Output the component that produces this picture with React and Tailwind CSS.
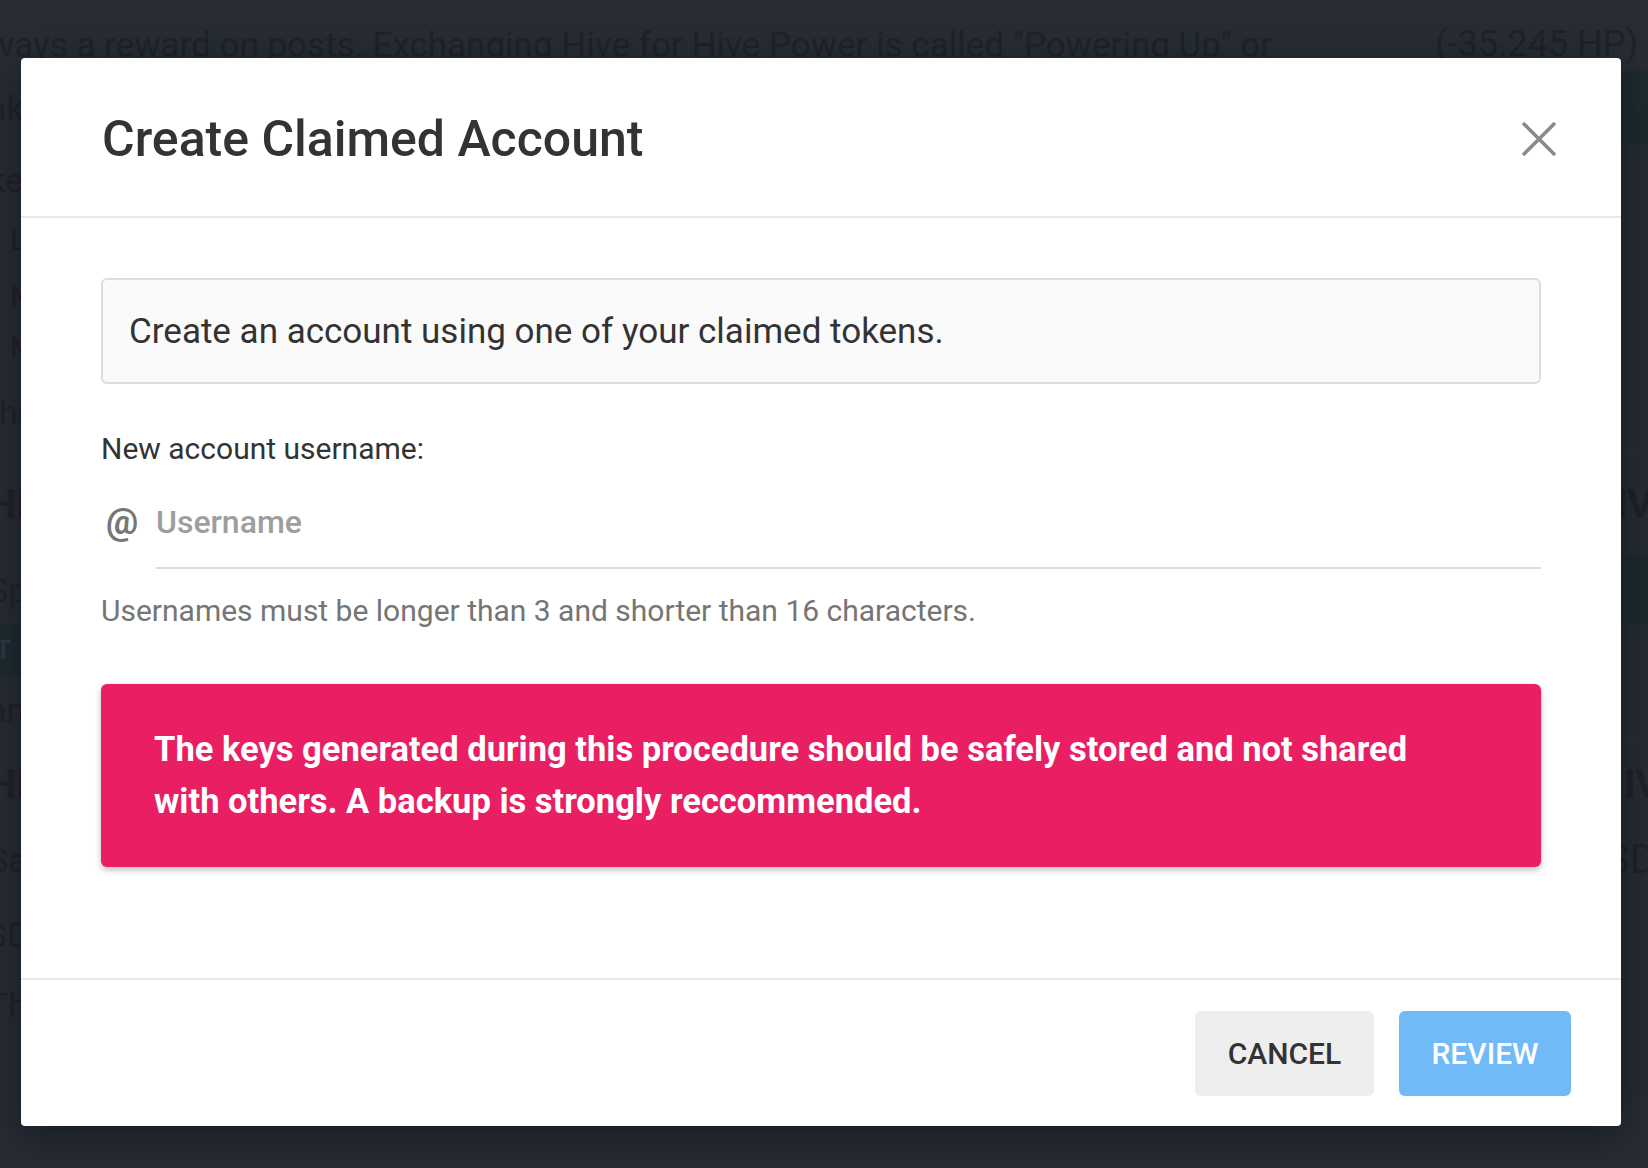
import React from "react";

const font = { fontFamily: "Roboto, 'Noto Sans', Arial, sans-serif" };

function Background() {
  return (
    <div className="flex flex-col w-full h-full ml-[-12px] text-[34px] leading-none">
      <div className="h-[26px]" />
      <div className="flex justify-between items-start h-[40px]">
        <div className="whitespace-nowrap text-[#1e2329] text-[35px] mt-[2px]">
          ways a reward on posts. Exchanging Hive for Hive Power is called "Powering Up" or
        </div>
        <div className="whitespace-nowrap text-[#1e2329] text-[36px] mr-[-2px]">(-35.245 HP)</div>
      </div>
      <div className="flex justify-between items-center h-[84px]">
        <div className="text-[#1e2329] text-[34px]">ake</div>
        <div className="w-[40px] h-[74px] bg-[#1e2a31] mr-[-12px]" />
      </div>
      <div className="flex items-center h-[60px] text-[#1e2329] text-[34px]">kee</div>
      <div className="flex flex-col pl-[22px] text-[#1e2329] text-[30px]">
        <div className="h-[60px] flex items-center">Lorem</div>
        <div className="h-[52px] flex items-center">More</div>
        <div className="h-[52px] flex items-center">More</div>
      </div>
      <div className="h-[76px] flex items-center text-[#1e2329] text-[34px] border-b border-[#2b3139]">the</div>
      <div className="flex justify-between items-center h-[110px]">
        <div className="text-[#1e2329] text-[40px] font-bold">Hive</div>
        <div className="text-[#1e2329] text-[40px] font-bold mr-[-40px]">HIVE</div>
      </div>
      <div className="flex justify-between items-center h-[60px]">
        <div className="text-[#1e2329] text-[34px]">Spot</div>
        <div className="w-[40px] h-[70px] bg-[#1e2a31] mr-[-12px]" />
      </div>
      <div className="flex items-center h-[60px]">
        <div className="bg-[#1d2a31] h-[50px] w-[40px] text-[#2a3a42] text-[26px] font-bold flex items-center">IT</div>
      </div>
      <div className="h-[60px] flex items-center text-[#1e2329] text-[34px] border-b border-[#2b3139]">and</div>
      <div className="flex justify-between items-center h-[90px]">
        <div className="text-[#1e2329] text-[40px] font-bold">Hive</div>
        <div className="text-[#1e2329] text-[40px] font-bold mr-[-48px]">HIVE</div>
      </div>
      <div className="flex justify-between items-center h-[60px]">
        <div className="text-[#1e2329] text-[34px]">Sal</div>
        <div className="text-[#1e2329] text-[40px] mr-[-20px]">$D</div>
      </div>
      <div className="h-[90px] flex items-center text-[#1e2329] text-[34px]">$D</div>
      <div className="h-[50px] flex items-center text-[#1e2329] text-[34px]">The</div>
    </div>
  );
}

function CloseIcon() {
  return (
    <svg width="36" height="36" viewBox="0 0 36 36" fill="none">
      <path d="M2 2 L34 34 M34 2 L2 34" stroke="#8a8a8a" strokeWidth="3.6" />
    </svg>
  );
}

export default function App() {
  return (
    <div className="relative w-[1648px] h-[1168px] overflow-hidden bg-[#272c35]" style={font}>
      <Background />
      <div className="absolute inset-0 pt-[58px] pl-[21px]">
        <div className="w-[1600px] h-[1068px] bg-white rounded-[4px] flex flex-col shadow-[0_10px_40px_rgba(0,0,0,0.4)]">
          {/* Header */}
          <div className="h-[160px] shrink-0 flex items-center justify-between pl-[81px] pr-[64px] pt-[3px] border-b-2 border-[#e8e8e8]">
            <h2 className="text-[50px] leading-none font-medium text-[#333333]">Create Claimed Account</h2>
            <button className="w-[36px] h-[36px] flex items-center justify-center">
              <CloseIcon />
            </button>
          </div>

          {/* Body */}
          <div className="flex-1 px-[80px] pt-[60px]">
            <div className="h-[106px] border-2 border-[#dddddd] rounded-[6px] bg-[#fafafa] flex items-center px-[26px]">
              <p className="text-[35px] leading-none text-[#333333]">
                Create an account using one of your claimed tokens.
              </p>
            </div>

            <div className="mt-[47px] text-[30px] leading-[36px] text-[#333333]">New account username:</div>

            <div className="mt-[35px] flex">
              <div className="w-[55px] shrink-0 text-[36px] leading-[40px] font-bold text-[#777777] pl-[5px]">@</div>
              <div className="flex-1 border-b-2 border-[#dddddd] pb-[25px]">
                <div className="text-[32px] leading-[40px] font-medium text-[#9e9e9e]">Username</div>
              </div>
            </div>

            <div className="mt-[24px] text-[30px] leading-[36px] text-[#757575]">
              Usernames must be longer than 3 and shorter than 16 characters.
            </div>

            <div className="mt-[55px] bg-[#e91e63] rounded-[6px] shadow-[0_3px_6px_rgba(0,0,0,0.25)] pl-[53px] pt-[39px] pb-[40px]">
              <p className="max-w-[1300px] text-[34.5px] leading-[52px] font-bold text-white">
                The keys generated during this procedure should be safely stored and not shared with others. A backup
                is strongly reccommended.
              </p>
            </div>
          </div>

          {/* Footer */}
          <div className="h-[148px] shrink-0 border-t-2 border-[#e8e8e8] flex items-center justify-end gap-[25px] pr-[50px]">
            <button className="w-[179px] h-[85px] rounded-[6px] bg-[#eeeeee] text-[30px] font-medium text-[#333333] uppercase">
              Cancel
            </button>
            <button className="w-[172px] h-[85px] rounded-[6px] bg-[#6fbaf7] text-[30px] font-medium text-white uppercase">
              Review
            </button>
          </div>
        </div>
      </div>
    </div>
  );
}
